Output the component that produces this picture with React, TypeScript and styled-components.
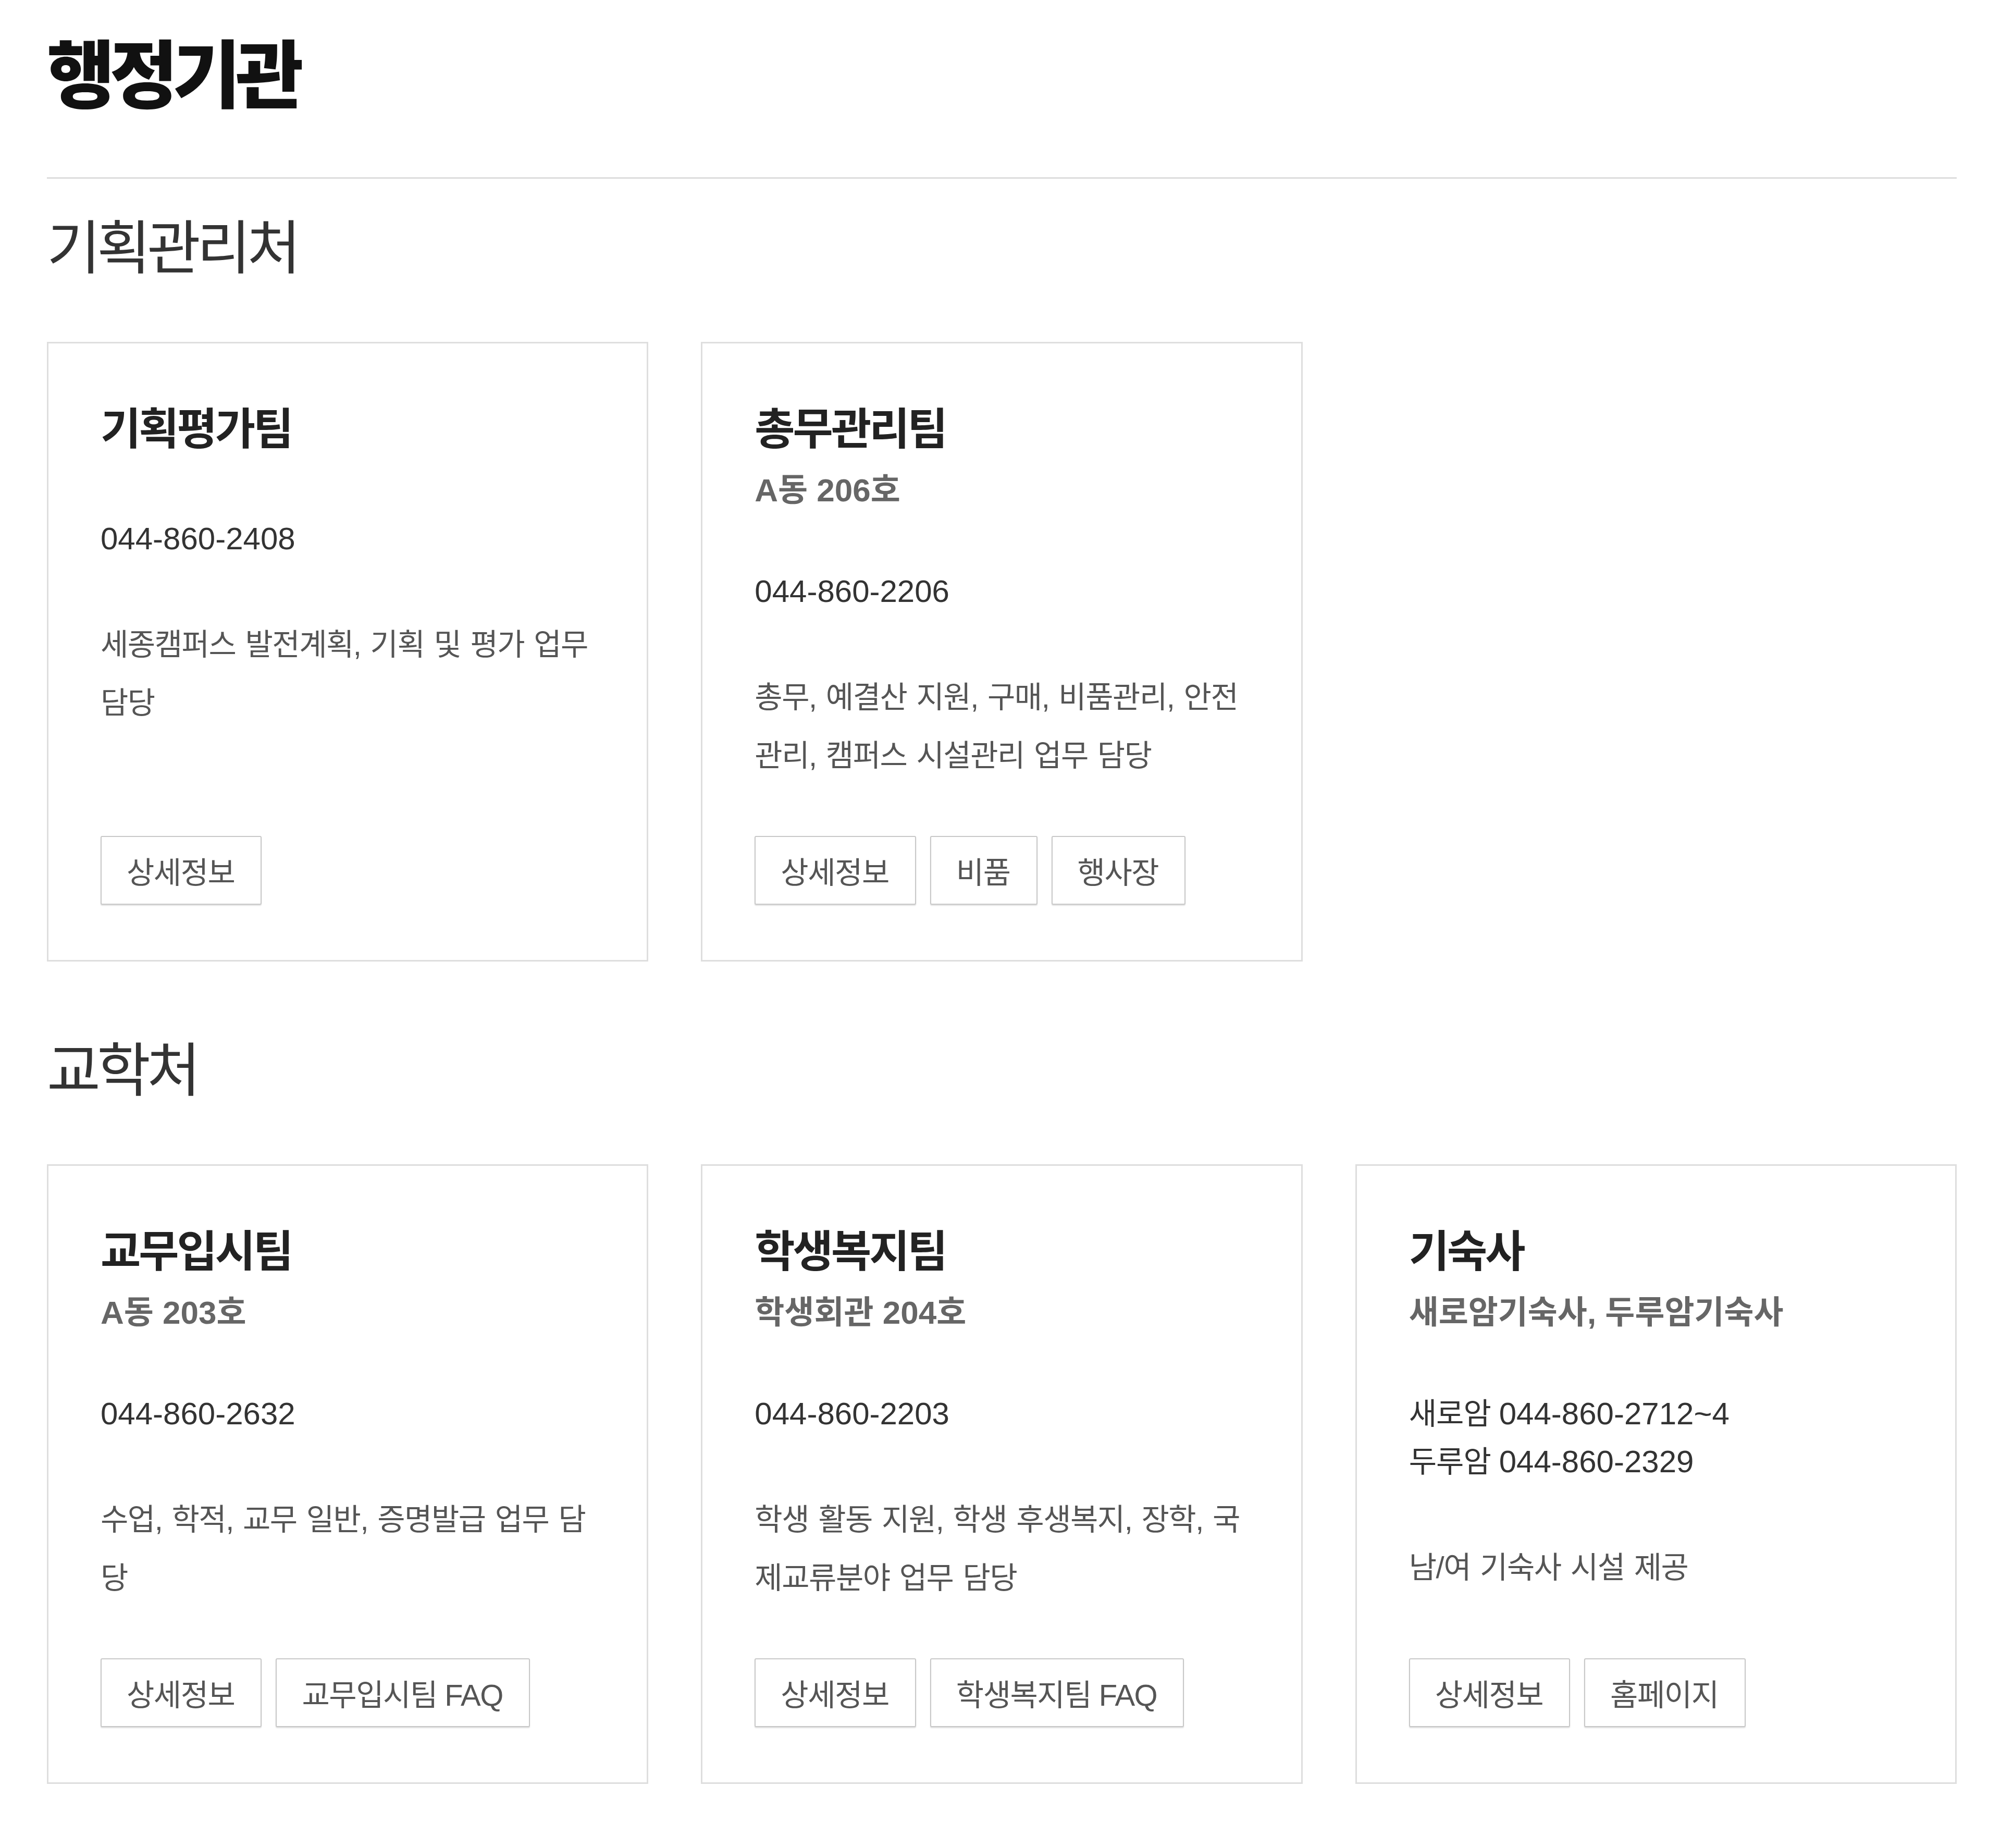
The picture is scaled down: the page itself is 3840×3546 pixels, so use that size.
import { createGlobalStyle, styled } from "styled-components";

const GlobalStyle = createGlobalStyle`
  html, body {
    margin: 0;
    padding: 0;
    background: #fff;
  }
  body {
    font-family: "Liberation Sans", "Noto Sans CJK KR", sans-serif;
    color: #222;
  }
  * {
    box-sizing: border-box;
  }
`;

const Page = styled.div`
  padding: 77px 85px 90px 90px;
`;
const PageTitle = styled.h1`
  margin: 0;
  padding-bottom: 123px;
  border-bottom: 3px solid #dddddd;
  font-size: 142px;
  line-height: 140px;
  font-weight: 900;
  letter-spacing: -10px;
  color: #111;
`;
const Section = styled.section`
  margin-top: 156px;
  &:first-of-type {
    margin-top: 80px;
  }
`;
const SectionTitle = styled.h2`
  margin: 0 0 123px;
  font-size: 112px;
  line-height: 110px;
  font-weight: 400;
  letter-spacing: -7px;
  color: #333;
`;
const CardGrid = styled.div`
  display: grid;
  grid-template-columns: repeat(3, 1fr);
  column-gap: 101px;
`;
const Card = styled.article`
  display: flex;
  flex-direction: column;
  border: 3px solid #dedede;
  padding: 115px 98px 106px 100px;
`;
const TeamName = styled.h3`
  margin: 0;
  font-size: 84px;
  line-height: 100px;
  font-weight: 700;
  letter-spacing: -4px;
  color: #222;
`;
const Place = styled.div`
  margin-top: 33px;
  font-size: 62px;
  line-height: 68px;
  font-weight: 700;
  color: #666;
`;
const PhoneList = styled.div`
  margin-top: 114px;
`;
const Phone = styled.div`
  font-size: 60px;
  line-height: 92px;
  color: #333;
`;
const PhoneLabel = styled.span`
  font-size: 58px;
  letter-spacing: -1px;
  margin-right: 16px;
`;
const Duty = styled.p`
  margin: 101px 0 98px;
  font-size: 58px;
  line-height: 112px;
  letter-spacing: -1.5px;
  word-spacing: 3.5px;
  color: #555;
`;
const LinkRow = styled.div`
  margin-top: auto;
  display: flex;
  gap: 27px;
`;
const LinkButton = styled.a`
  display: inline-flex;
  align-items: center;
  justify-content: center;
  height: 132px;
  padding: 0 50px 0 48px;
  border: 2px solid #c8c8c8;
  border-radius: 3px;
  box-shadow: 0 2px 2px rgba(0, 0, 0, 0.12);
  background: #fff;
  font-size: 58px;
  letter-spacing: -1.5px;
  color: #555;
  text-decoration: none;
  cursor: pointer;
`;

type PhoneEntry = { label?: string; number: string };
type Team = {
  name: string;
  place?: string;
  phones: PhoneEntry[];
  duty: string;
  links: string[];
};
type Office = { name: string; teams: Team[] };

const offices: Office[] = [
  {
    name: "기획관리처",
    teams: [
      {
        name: "기획평가팀",
        phones: [{ number: "044-860-2408" }],
        duty: "세종캠퍼스 발전계획, 기획 및 평가 업무 담당",
        links: ["상세정보"],
      },
      {
        name: "총무관리팀",
        place: "A동 206호",
        phones: [{ number: "044-860-2206" }],
        duty: "총무, 예결산 지원, 구매, 비품관리, 안전관리, 캠퍼스 시설관리 업무 담당",
        links: ["상세정보", "비품", "행사장"],
      },
    ],
  },
  {
    name: "교학처",
    teams: [
      {
        name: "교무입시팀",
        place: "A동 203호",
        phones: [{ number: "044-860-2632" }],
        duty: "수업, 학적, 교무 일반, 증명발급 업무 담당",
        links: ["상세정보", "교무입시팀 FAQ"],
      },
      {
        name: "학생복지팀",
        place: "학생회관 204호",
        phones: [{ number: "044-860-2203" }],
        duty: "학생 활동 지원, 학생 후생복지, 장학, 국제교류분야 업무 담당",
        links: ["상세정보", "학생복지팀 FAQ"],
      },
      {
        name: "기숙사",
        place: "새로암기숙사, 두루암기숙사",
        phones: [
          { label: "새로암", number: "044-860-2712~4" },
          { label: "두루암", number: "044-860-2329" },
        ],
        duty: "남/여 기숙사 시설 제공",
        links: ["상세정보", "홈페이지"],
      },
    ],
  },
];

function TeamCard({ team }: { team: Team }) {
  return (
    <Card>
      <TeamName>{team.name}</TeamName>
      {team.place ? <Place>{team.place}</Place> : null}
      <PhoneList>
        {team.phones.map((p) => (
          <Phone key={p.number}>
            {p.label ? <PhoneLabel>{p.label}</PhoneLabel> : null}
            {p.number}
          </Phone>
        ))}
      </PhoneList>
      <Duty>{team.duty}</Duty>
      <LinkRow>
        {team.links.map((l) => (
          <LinkButton key={l}>{l}</LinkButton>
        ))}
      </LinkRow>
    </Card>
  );
}

export default function App() {
  return (
    <>
      <GlobalStyle />
      <Page>
        <PageTitle>행정기관</PageTitle>
        {offices.map((office) => (
          <Section key={office.name}>
            <SectionTitle>{office.name}</SectionTitle>
            <CardGrid>
              {office.teams.map((team) => (
                <TeamCard key={team.name} team={team} />
              ))}
            </CardGrid>
          </Section>
        ))}
      </Page>
    </>
  );
}
